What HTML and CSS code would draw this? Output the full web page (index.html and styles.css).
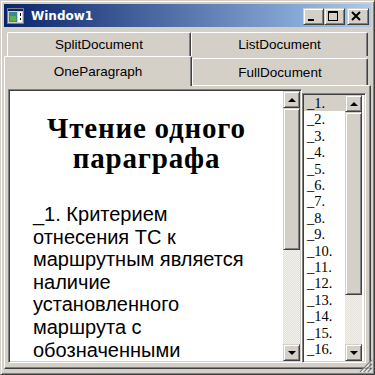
FILE: index.html
```html
<!DOCTYPE html>
<html lang="ru">

<head>
    <meta charset="UTF-8">
    <title>Window1</title>
    <link rel="stylesheet" href="styles.css">
</head>

<body>

    <div class="window">
        <div class="titlebar">
            <svg class="app-icon" width="17" height="16" viewBox="0 0 17 16">
                <rect x="0.5" y="0.5" width="16" height="15" fill="#d4d0c8" stroke="#808080"/>
                <rect x="1" y="1" width="15" height="2" fill="#0a246a"/>
                <rect x="2" y="4" width="8" height="10" fill="#3a8a8a"/>
                <rect x="3" y="8" width="6" height="5" fill="#5fae4f"/>
                <rect x="11" y="4" width="4" height="10" fill="#fff"/>
                <rect x="13" y="5" width="1" height="3" fill="#000"/>
                <rect x="13" y="10" width="1" height="2" fill="#000"/>
            </svg>
            <span class="title">Window1</span>
            <div class="caption-buttons">
                <div class="cap-btn">
                    <svg width="19" height="15" viewBox="0 0 19 15"><rect x="4" y="10" width="6" height="2" fill="#000"/></svg>
                </div>
                <div class="cap-btn">
                    <svg width="19" height="15" viewBox="0 0 19 15"><rect x="3.5" y="2.5" width="9" height="9" fill="none" stroke="#000"/><rect x="3" y="2" width="10" height="2" fill="#000"/></svg>
                </div>
                <div class="cap-btn close">
                    <svg width="20" height="15" viewBox="0 0 20 15"><path d="M4 3 L12 11 M12 3 L4 11" stroke="#000" stroke-width="2"/></svg>
                </div>
            </div>
        </div>

        <div class="tabs">
            <div class="tab-row back">
                <div class="tab split">SplitDocument</div>
                <div class="tab list">ListDocument</div>
            </div>
            <div class="tab-row front">
                <div class="tab selected">OneParagraph</div>
                <div class="tab full">FullDocument</div>
            </div>
        </div>

        <div class="panel">
            <div class="doc-box">
                <div class="doc">
                    <h1>Чтение одного параграфа</h1>
                    <p>_1. Критерием отнесения ТС к маршрутным является наличие установленного маршрута с обозначенными</p>
                </div>
                <div class="vscroll">
                    <div class="sb-btn"><span class="arrow up"></span></div>
                    <div class="thumb doc-thumb"></div>
                    <div class="track"></div>
                    <div class="sb-btn"><span class="arrow down"></span></div>
                </div>
            </div>

            <div class="list-box">
                <ul class="items">
                    <li class="selected">_1.</li>
                    <li>_2.</li>
                    <li>_3.</li>
                    <li>_4.</li>
                    <li>_5.</li>
                    <li>_6.</li>
                    <li>_7.</li>
                    <li>_8.</li>
                    <li>_9.</li>
                    <li>_10.</li>
                    <li>_11.</li>
                    <li>_12.</li>
                    <li>_13.</li>
                    <li>_14.</li>
                    <li>_15.</li>
                    <li>_16.</li>
                </ul>
                <div class="vscroll">
                    <div class="sb-btn"><span class="arrow up"></span></div>
                    <div class="thumb list-thumb"></div>
                    <div class="track"></div>
                    <div class="sb-btn"><span class="arrow down"></span></div>
                </div>
            </div>
        </div>

        <svg class="grip" width="14" height="14" viewBox="0 0 14 14">
            <path d="M13 1 L1 13 M13 5 L5 13 M13 9 L9 13" stroke="#808080" stroke-width="1.4"/>
            <path d="M13 2.5 L2.5 13 M13 6.5 L6.5 13 M13 10.5 L10.5 13" stroke="#fff" stroke-width="1"/>
        </svg>
    </div>

</body>

</html>
```

FILE: styles.css
```css
body {
    margin: 0;
    padding: 0;
    background-color: #d4d0c8;
    font-family: "Liberation Sans", Arial, sans-serif;
}

.window {
    position: relative;
    width: 375px;
    height: 375px;
    box-sizing: border-box;
    display: flex;
    flex-direction: column;
    padding: 3px;
    background-color: #d4d0c8;
    border: 1px solid;
    border-color: #d4d0c8 #404040 #404040 #d4d0c8;
    box-shadow: inset 1px 1px #fff, inset -1px -1px #808080;
}

/* title bar */

.titlebar {
    height: 23px;
    flex-shrink: 0;
    box-sizing: border-box;
    display: flex;
    align-items: center;
    padding: 2px 2px 0 3px;
    background: linear-gradient(to right, #0a246a, #a6caf0);
    color: #fff;
}

.app-icon {
    margin-top: -1px;
}

.title {
    margin-left: 7px;
    font-family: "DejaVu Sans", sans-serif;
    font-weight: bold;
    font-size: 12px;
    margin-top: -1px;
}

.caption-buttons {
    margin-left: auto;
    display: flex;
}

.cap-btn {
    width: 21px;
    height: 17px;
    box-sizing: border-box;
    background-color: #d4d0c8;
    border: 1px solid;
    border-color: #d4d0c8 #404040 #404040 #d4d0c8;
    box-shadow: inset 1px 1px #fff, inset -1px -1px #808080;
}

.cap-btn svg {
    display: block;
}

.cap-btn.close {
    width: 22px;
    margin-left: 2px;
}

/* tabs */

.tabs {
    margin-top: 5px;
    font-size: 13.5px;
    color: #000;
}

.tab-row {
    display: flex;
}

.tab {
    box-sizing: border-box;
    display: flex;
    align-items: center;
    justify-content: center;
    background-color: #d4d0c8;
    border-top: 1px solid #fff;
    border-left: 1px solid #fff;
    border-right: 1px solid #404040;
    border-radius: 2px 2px 0 0;
    box-shadow: inset -1px 0 #808080;
}

.back {
    height: 24px;
    padding-left: 3px;
}

.back .split {
    width: 184px;
}

.back .list {
    width: 177px;
}

.front {
    height: 29px;
}

.tab.selected {
    position: relative;
    z-index: 1;
    width: 188px;
    height: 30px;
    padding-bottom: 1px;
}

.tab.full {
    width: 176px;
    margin-top: 2px;
    height: 27px;
}

/* tab page */

.panel {
    flex: 1;
    display: flex;
    align-items: flex-start;
    margin-bottom: 2px;
    padding: 3px 4px 5px 3px;
    border-top: 1px solid #fff;
    border-left: 1px solid #fff;
    border-right: 1px solid #404040;
    border-bottom: 1px solid #404040;
    box-shadow: inset -1px -1px #808080;
    min-height: 0;
}

.doc-box,
.list-box {
    box-sizing: border-box;
    display: flex;
    padding: 1px;
    border: 1px solid;
    border-color: #808080 #fff #fff #808080;
    box-shadow: inset 1px 1px #404040, inset -1px -1px #d4d0c8;
    overflow: hidden;
}

.doc-box {
    width: 294px;
    height: 274px;
}

.doc {
    flex: 1;
    background-color: #fff;
    padding: 0 20px;
    overflow: hidden;
    color: #000;
}

.doc h1 {
    margin: 22px 0 0;
    font-family: "Liberation Serif", "Times New Roman", serif;
    font-size: 29px;
    line-height: 30px;
    letter-spacing: 0.8px;
    text-align: center;
}

.doc p {
    margin: 30px 3px 0;
    font-size: 20px;
    line-height: 22.6px;
}

.list-box {
    flex: 1;
    height: 270px;
    margin-top: 4px;
    padding-right: 3px;
    background-color: #fff;
}

.items {
    flex: 1;
    margin: 0;
    padding: 0;
    list-style: none;
    overflow: hidden;
    font-family: "Liberation Serif", "Times New Roman", serif;
    font-size: 14.5px;
    line-height: 16.4px;
    color: #000;
}

.items li {
    padding-left: 3px;
}

.items li.selected {
    background-color: #d4d0c8;
}

/* scrollbars */

.vscroll {
    width: 17px;
    flex-shrink: 0;
    display: flex;
    flex-direction: column;
}

.sb-btn,
.thumb {
    box-sizing: border-box;
    background-color: #d4d0c8;
    border: 1px solid;
    border-color: #d4d0c8 #404040 #404040 #d4d0c8;
    box-shadow: inset 1px 1px #fff, inset -1px -1px #808080;
}

.sb-btn {
    height: 17px;
    display: flex;
    align-items: center;
    justify-content: center;
}

.arrow {
    width: 0;
    height: 0;
    border-left: 4px solid transparent;
    border-right: 4px solid transparent;
}

.arrow.up {
    border-bottom: 4px solid #000;
}

.arrow.down {
    border-top: 4px solid #000;
}

.doc-thumb {
    height: 142px;
}

.list-thumb {
    height: 183px;
}

.track {
    flex: 1;
    background: repeating-conic-gradient(#f2f1ec 0 25%, #e4e1da 0 50%) 0 0 / 2px 2px;
}

.grip {
    position: absolute;
    right: 1px;
    bottom: 1px;
}
```
